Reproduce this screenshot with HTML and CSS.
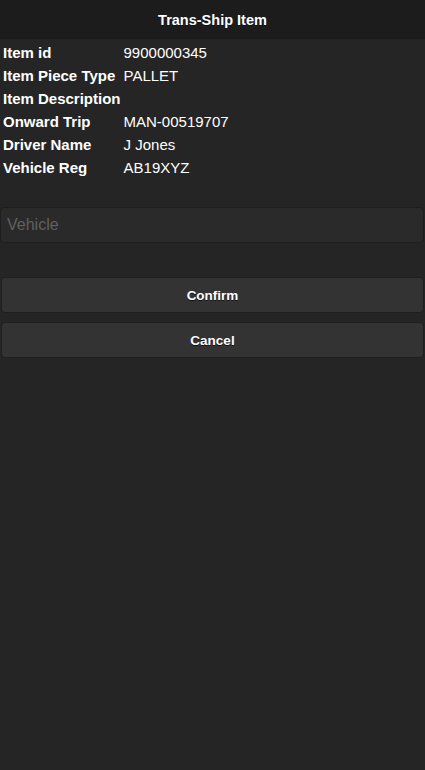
FILE: index.html
```html
<!DOCTYPE html>
<html>
<head>
<meta charset="utf-8">
<link rel="stylesheet" href="styles.css">
</head>
<body>
<div class="page">
  <header class="header"><h1 class="title">Trans-Ship Item</h1></header>
  <table class="info">
    <tr><td class="lbl">Item id</td><td class="val">9900000345</td></tr>
    <tr><td class="lbl">Item Piece Type</td><td class="val">PALLET</td></tr>
    <tr><td class="lbl">Item Description</td><td class="val"></td></tr>
    <tr><td class="lbl">Onward Trip</td><td class="val">MAN-00519707</td></tr>
    <tr><td class="lbl">Driver Name</td><td class="val">J Jones</td></tr>
    <tr><td class="lbl">Vehicle Reg</td><td class="val">AB19XYZ</td></tr>
  </table>
  <div class="content">
    <div class="field"><input class="input" type="text" placeholder="Vehicle"></div>
    <div class="actions">
      <button class="btn">Confirm</button>
      <button class="btn">Cancel</button>
    </div>
  </div>
</div>
</body>
</html>
```

FILE: styles.css
```css
html, body {
  margin: 0;
  padding: 0;
  height: 100%;
  background: #252525;
}
body {
  font-family: "Liberation Sans", Arial, sans-serif;
  color: #fff;
}
.page {
  min-height: 100%;
  background: #252525;
}
.header {
  height: 39px;
  background: #1c1c1c;
  border-bottom: 1px solid #222;
  display: flex;
  align-items: center;
  justify-content: center;
}
.title {
  margin: 0;
  font-size: 14.5px;
  font-weight: bold;
  color: #fff;
  text-shadow: 0 1px 0 #111;
}
.info {
  border-spacing: 2px;
  font-size: 15px;
  color: #fff;
}
.info td {
  padding: 2px 1px;
  line-height: 17px;
  white-space: nowrap;
}
.info td.val {
  padding-left: 0;
}
.lbl {
  font-weight: bold;
}
.content {
  padding: 27px 1px 0 0;
}
.field {
  margin: 0;
}
.input {
  display: block;
  box-sizing: border-box;
  width: 100%;
  height: 36px;
  margin: 0;
  padding: 0 6px;
  background: #2a2a2a;
  border: 1px solid #1e1e1e;
  border-radius: 4px;
  color: #fff;
  font-family: "Liberation Sans", Arial, sans-serif;
  font-size: 16px;
  outline: none;
}
.input::placeholder {
  color: #606060;
}
.actions {
  margin-top: 34px;
  display: flex;
  flex-direction: column;
  gap: 9px;
  padding-left: 1px;
}
.btn {
  display: block;
  box-sizing: border-box;
  width: 100%;
  height: 36px;
  margin: 0;
  padding: 0;
  background: #333;
  border: 1px solid #1f1f1f;
  border-radius: 4px;
  color: #fff;
  font-family: "Liberation Sans", Arial, sans-serif;
  font-size: 13.5px;
  font-weight: bold;
  text-shadow: 0 1px 0 #111;
  cursor: pointer;
}
```
